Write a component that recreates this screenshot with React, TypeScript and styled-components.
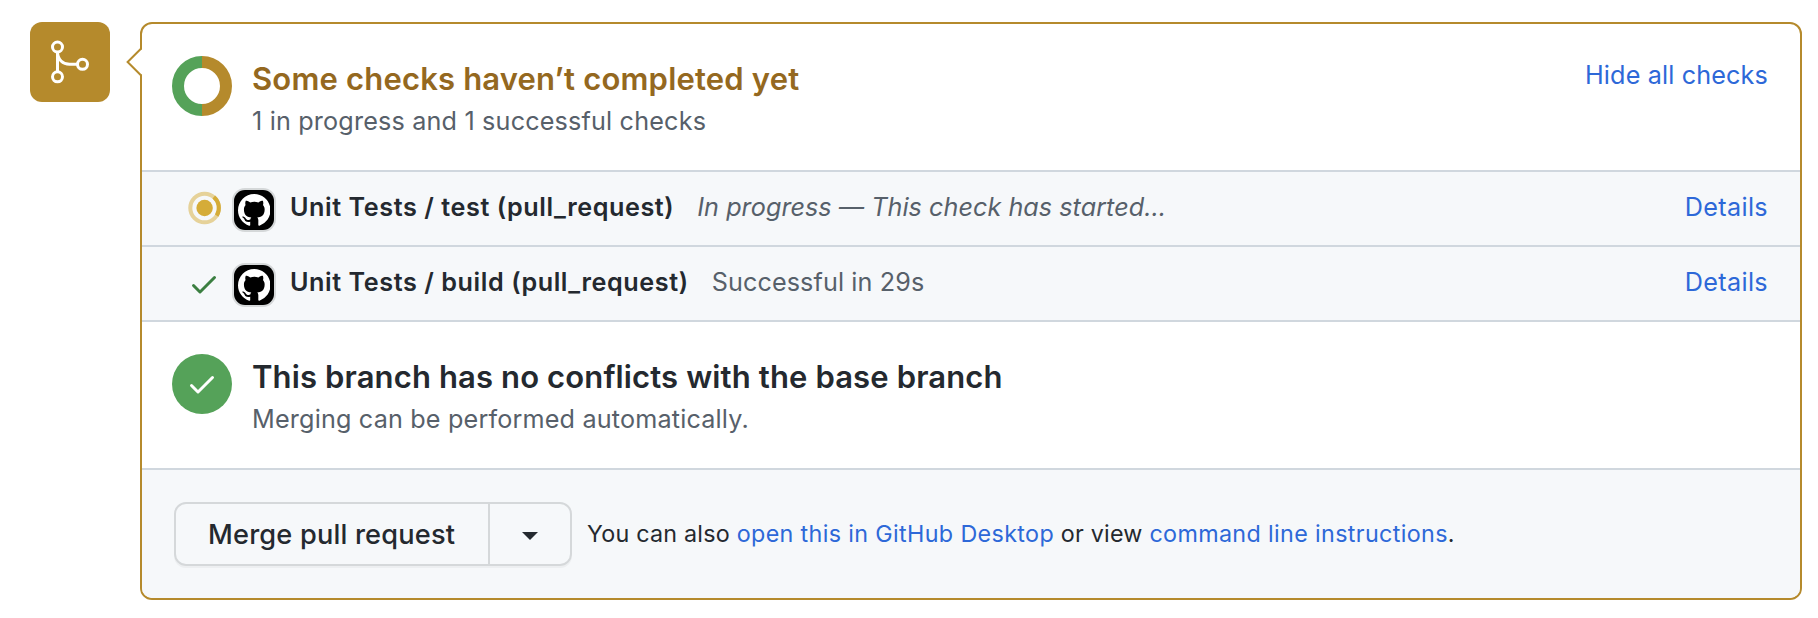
import React from 'react';
import styled, { createGlobalStyle } from 'styled-components';

const color = {
  attention: '#b58a2c',
  attentionText: '#946820',
  pending: '#d5ac38',
  success: '#55a259',
  successText: '#3b7f41',
  link: '#2d68d8',
  text: '#24292f',
  muted: '#57606a',
  line: '#d0d7de',
  subtle: '#f6f8fa',
};

const GlobalStyle = createGlobalStyle`
  *, *::before, *::after { box-sizing: border-box; }
  body {
    margin: 0;
    background: #fff;
    color: ${color.text};
    font-family: Inter, "Liberation Sans", sans-serif;
  }
  svg { display: block; flex: none; }
`;

const Page = styled.main`
  display: flex;
  align-items: flex-start;
  gap: 30px;
  padding: 22px 16px 18px 30px;
`;

const MergeBadge = styled.div`
  flex: none;
  width: 80px;
  height: 80px;
  border-radius: 12px;
  background: ${color.attention};
`;

const Panel = styled.section`
  position: relative;
  flex: 1;
  border: 2px solid ${color.attention};
  border-radius: 12px;
  background: #fff;
`;

const Caret = styled.svg`
  position: absolute;
  left: -17px;
  top: 22px;
`;

const Section = styled.div`
  display: flex;
  align-items: flex-start;
  height: 148px;
  padding: 32px 32px 0 30px;
  border-bottom: 2px solid ${color.line};
`;

const SectionText = styled.div`
  flex: 1;
  margin-left: 20px;
`;

const Title = styled.h3<{ $tone?: string }>`
  margin: 0;
  font-size: 31px;
  font-weight: 600;
  line-height: 46px;
  letter-spacing: ${(p) => (p.$tone ? '0.18px' : '0.13px')};
  white-space: nowrap;
  color: ${(p) => p.$tone ?? color.text};
`;

const Subtitle = styled.p`
  margin: 0;
  font-size: 25.2px;
  line-height: 38px;
  letter-spacing: 0.17px;
  white-space: nowrap;
  color: ${color.muted};
`;

const Link = styled.a`
  color: ${color.link};
  text-decoration: none;
`;

const ToggleLink = styled(Link)`
  font-size: 25.2px;
  line-height: 39px;
  letter-spacing: 0.14px;
`;

const SuccessDisc = styled.div`
  display: flex;
  align-items: center;
  justify-content: center;
  flex: none;
  width: 60px;
  height: 60px;
  border-radius: 50%;
  background: ${color.success};
`;

const Row = styled.div`
  display: flex;
  align-items: flex-start;
  height: 75px;
  padding: 0 32px 0 46px;
  border-bottom: 2px solid ${color.line};
  background: ${color.subtle};
  font-size: 25.2px;
  line-height: 71px;
  white-space: nowrap;
`;

const StateIcon = styled.span`
  flex: none;
  width: 32px;
  margin-top: 21px;
`;

const Avatar = styled.span`
  display: flex;
  align-items: center;
  justify-content: center;
  flex: none;
  width: 40px;
  height: 40px;
  margin: 18px 16px 0 14px;
  border-radius: 11px;
  background: #000;
  box-shadow: 0 0 0 2px rgba(27, 31, 36, 0.15);
`;

const CheckName = styled.strong`
  font-weight: 600;
  letter-spacing: 0.57px;
`;

const CheckStatus = styled.span<{ $italic?: boolean }>`
  flex: 1;
  margin-left: 23px;
  color: ${color.muted};
  font-style: ${(p) => (p.$italic ? 'italic' : 'normal')};
  letter-spacing: ${(p) => (p.$italic ? '0.04px' : '0.11px')};
`;

const DetailsLink = styled(Link)`
  letter-spacing: 0.35px;
`;

const Footer = styled.footer`
  display: flex;
  align-items: center;
  gap: 15px;
  height: 128px;
  padding: 0 32px;
  border-radius: 0 0 10px 10px;
  background: ${color.subtle};
`;

const ButtonGroup = styled.div`
  display: flex;
  height: 64px;
  border: 2px solid #d5d8da;
  border-radius: 12px;
  box-shadow: 0 2px 0 rgba(27, 31, 36, 0.04);
`;

const buttonReset = `
  border: 0;
  background: transparent;
  color: inherit;
  font-family: inherit;
`;

const MergeButton = styled.button`
  ${buttonReset}
  width: 312px;
  padding: 0 0 0 32px;
  text-align: left;
  font-size: 27.2px;
  font-weight: 500;
  letter-spacing: 0.18px;
  white-space: nowrap;
`;

const MenuButton = styled.button`
  ${buttonReset}
  display: flex;
  align-items: center;
  justify-content: center;
  width: 82px;
  padding: 4px 0 0;
  border-left: 2px solid #d5d8da;
`;

const Hint = styled.p`
  margin: 0;
  font-size: 23.3px;
  line-height: 36px;
  letter-spacing: 0.22px;
  white-space: nowrap;

  ${Link} {
    letter-spacing: 0.36px;
  }
`;

const MergeIcon = () => (
  <svg width="80" height="80" fill="none" stroke="#fff" strokeWidth="3">
    <circle cx="27.5" cy="25" r="5" />
    <circle cx="52.5" cy="42.3" r="5" />
    <circle cx="27.5" cy="54.8" r="5" />
    <path d="M27.5 30V50M27.5 30C27.5 37.5 33 42.3 39.5 42.3H47.5" />
  </svg>
);

const DonutIcon = () => (
  <svg width="60" height="60" fill="none" strokeWidth="12">
    <path d="M30 6a24 24 0 0 0 0 48" stroke={color.success} />
    <path d="M30 6a24 24 0 0 1 0 48" stroke={color.attention} />
  </svg>
);

const ProgressIcon = () => (
  <svg width="34" height="32" overflow="visible" fill="none">
    <circle cx="16.6" cy="15" r="14.3" stroke={color.pending} strokeOpacity="0.5" strokeWidth="4" />
    <path d="M25.8 4.05A14.3 14.3 0 0 1 28.7 22.6" stroke={color.pending} strokeWidth="4" />
    <circle cx="16.6" cy="15" r="8.2" fill={color.pending} />
  </svg>
);

const CheckIcon = ({ fill }: { fill: string }) => (
  <svg width="32" height="32" viewBox="0 0 16 16" fill={fill}>
    <path d="M13.78 4.22a.75.75 0 010 1.06l-7.25 7.25a.75.75 0 01-1.06 0L2.22 9.28a.75.75 0 011.06-1.06L6 10.94l6.72-6.72a.75.75 0 011.06 0z" />
  </svg>
);

const MarkIcon = () => (
  <svg width="32.5" height="32.5" viewBox="0 0 16 16" fill="#fff">
    <path d="M8 0C3.58 0 0 3.58 0 8c0 3.54 2.29 6.53 5.47 7.59.4.07.55-.17.55-.38 0-.19-.01-.82-.01-1.49-2.01.37-2.53-.49-2.69-.94-.09-.23-.48-.94-.82-1.13-.28-.15-.68-.52-.01-.53.63-.01 1.08.58 1.23.82.72 1.21 1.87.87 2.33.66.07-.52.28-.87.51-1.07-1.78-.2-3.64-.89-3.64-3.95 0-.87.31-1.59.82-2.15-.08-.2-.36-1.02.08-2.12 0 0 .67-.21 2.2.82.64-.18 1.32-.27 2-.27.68 0 1.36.09 2 .27 1.53-1.04 2.2-.82 2.2-.82.44 1.1.16 1.92.08 2.12.51.56.82 1.27.82 2.15 0 3.07-1.87 3.75-3.65 3.95.29.25.54.73.54 1.48 0 1.07-.01 1.93-.01 2.2 0 .21.15.46.55.38A8.013 8.013 0 0016 8c0-4.42-3.58-8-8-8z" />
  </svg>
);

type CheckRowProps = { icon: React.ReactNode; name: string; status: string; running?: boolean };

const CheckRow = ({ icon, name, status, running }: CheckRowProps) => (
  <Row>
    <StateIcon>{icon}</StateIcon>
    <Avatar>
      <MarkIcon />
    </Avatar>
    <CheckName>{name}</CheckName>
    <CheckStatus $italic={running}>{status}</CheckStatus>
    <DetailsLink>Details</DetailsLink>
  </Row>
);

export default function App() {
  return (
    <>
      <GlobalStyle />
      <Page>
        <MergeBadge>
          <MergeIcon />
        </MergeBadge>
        <Panel>
          <Caret width="18" height="32">
            <path d="M17.5 3.4H15.2L2.6 16L15.2 28.6H17.5Z" fill="#fff" />
            <path d="M16.4 2.2L2.6 16L16.4 29.8" fill="none" stroke={color.attention} strokeWidth="2" />
          </Caret>
          <Section>
            <DonutIcon />
            <SectionText>
              <Title $tone={color.attentionText}>Some checks haven’t completed yet</Title>
              <Subtitle>1 in progress and 1 successful checks</Subtitle>
            </SectionText>
            <ToggleLink>Hide all checks</ToggleLink>
          </Section>
          <CheckRow
            icon={<ProgressIcon />}
            name="Unit Tests / test (pull_request)"
            status="In progress — This check has started..."
            running
          />
          <CheckRow
            icon={<CheckIcon fill={color.successText} />}
            name="Unit Tests / build (pull_request)"
            status="Successful in 29s"
          />
          <Section>
            <SuccessDisc>
              <CheckIcon fill="#fff" />
            </SuccessDisc>
            <SectionText>
              <Title>This branch has no conflicts with the base branch</Title>
              <Subtitle>Merging can be performed automatically.</Subtitle>
            </SectionText>
          </Section>
          <Footer>
            <ButtonGroup>
              <MergeButton>Merge pull request</MergeButton>
              <MenuButton aria-label="Select merge method">
                <svg width="16" height="8">
                  <path d="M0 0H16L8 8Z" fill={color.text} />
                </svg>
              </MenuButton>
            </ButtonGroup>
            <Hint>
              You can also <Link>open this in GitHub Desktop</Link> or view{' '}
              <Link>command line instructions</Link>.
            </Hint>
          </Footer>
        </Panel>
      </Page>
    </>
  );
}
